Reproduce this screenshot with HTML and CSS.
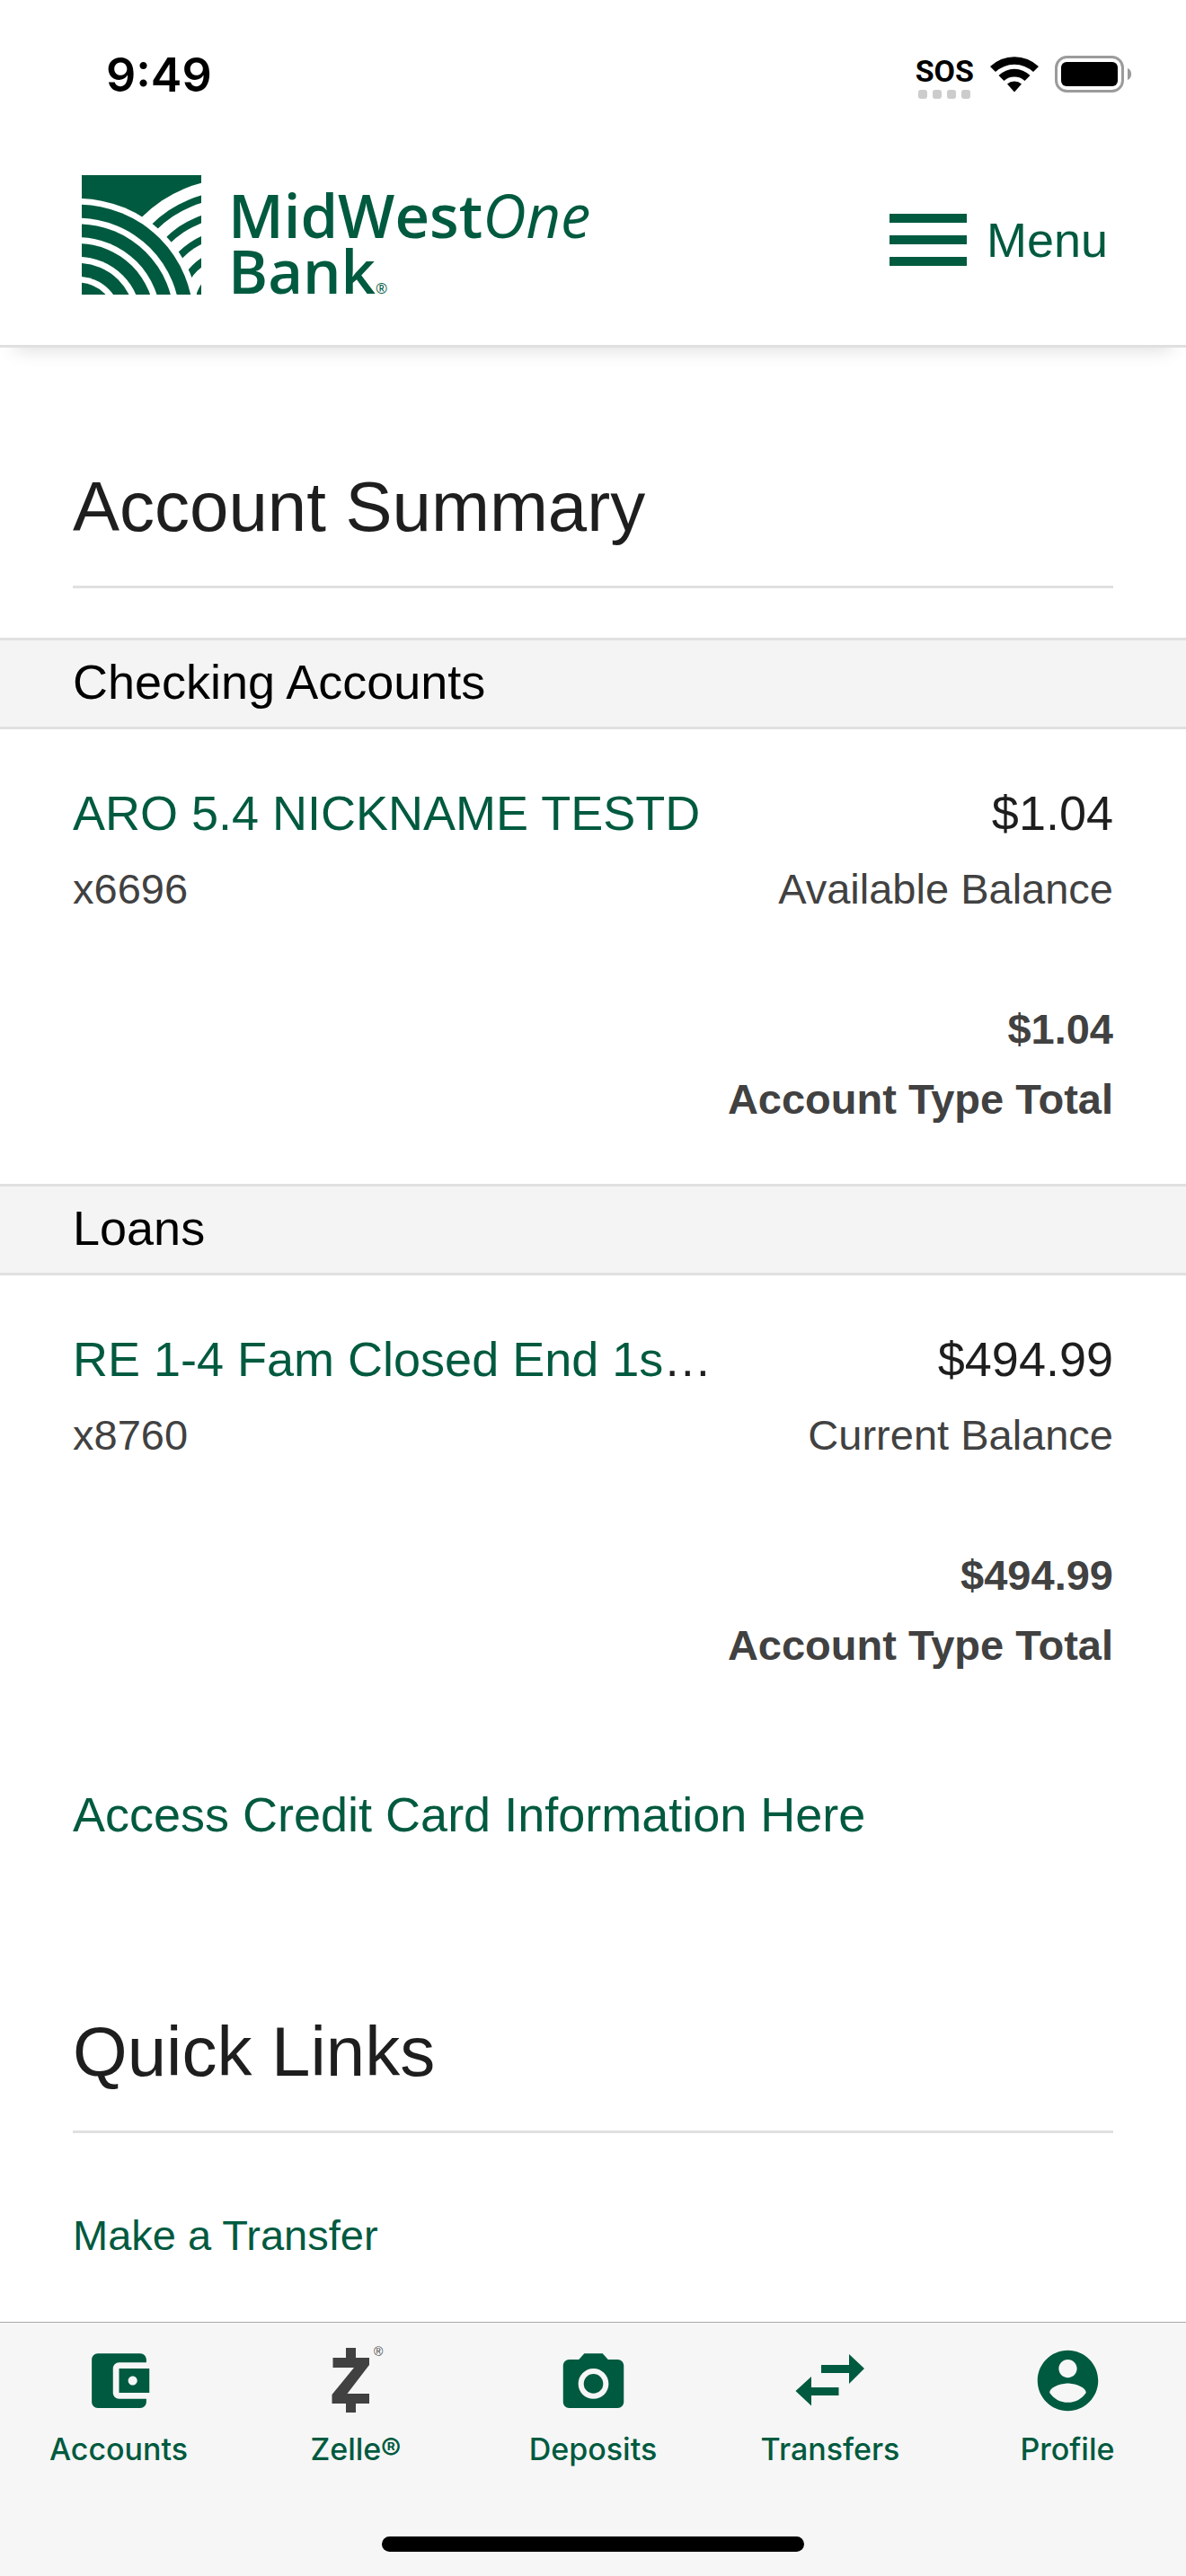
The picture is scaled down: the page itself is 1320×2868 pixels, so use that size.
FILE: index.html
```html
<!DOCTYPE html>
<html lang="en">

<head>
    <meta charset="UTF-8">
    <meta name="viewport" content="width=device-width, initial-scale=1.0">
    <title>Account Summary - MidWestOne Bank</title>
    <link rel="stylesheet" href="styles.css">
</head>

<body>
    <div class="status-bar">
        <span class="time">9:49</span>
        <div class="status-icons">
            <div class="sos">
                <span>SOS</span>
                <div class="dots"><i></i><i></i><i></i><i></i></div>
            </div>
            <svg class="wifi" viewBox="0 0 54 41" width="54" height="41">
                <path d="M0 12A39 39 0 0 1 54 12L48 18A31 31 0 0 0 6 18Z" />
                <path d="M9.500 22A25 25 0 0 1 44.500 22L38.500 28A17 17 0 0 0 15.500 28Z" />
                <path d="M19 31.500A12 12 0 0 1 35 31.500L27 40.500Z" />
            </svg>
            <svg class="battery" viewBox="0 0 86 41" width="86" height="41">
                <rect x="1.500" y="1.500" width="74" height="38" rx="12" fill="#fff" stroke="#9b9b9b" stroke-width="3" />
                <rect x="7" y="7" width="63" height="27" rx="6" />
                <path d="M81 14C86.500 16 86.500 25 81 27Z" fill="#9b9b9b" />
            </svg>
        </div>
    </div>

    <header class="header">
        <a class="logo" href="#">
            <svg viewBox="32 45 398 398" width="133" height="133">
                <rect x="32" y="45" width="398" height="398" fill="#005a3f" />
                <!-- right field -->
                <g fill="#fff">
                    <circle cx="535" cy="482" r="424" />
                    <circle cx="535" cy="482" r="384" fill="#005a3f" />
                    <circle cx="535" cy="482" r="360" />
                    <circle cx="535" cy="482" r="320" fill="#005a3f" />
                    <circle cx="535" cy="482" r="296" />
                    <circle cx="535" cy="482" r="256" fill="#005a3f" />
                    <circle cx="535" cy="482" r="232" />
                    <circle cx="535" cy="482" r="192" fill="#005a3f" />
                    <circle cx="535" cy="482" r="167" />
                    <circle cx="535" cy="482" r="128" fill="#005a3f" />
                </g>
                <!-- left field -->
                <g fill="#fff">
                    <circle cx="20" cy="527" r="404" />
                    <circle cx="20" cy="527" r="384" fill="#005a3f" />
                    <circle cx="20" cy="527" r="339" />
                    <circle cx="20" cy="527" r="319" fill="#005a3f" />
                    <circle cx="20" cy="527" r="275" />
                    <circle cx="20" cy="527" r="254" fill="#005a3f" />
                    <circle cx="20" cy="527" r="210" />
                    <circle cx="20" cy="527" r="189" fill="#005a3f" />
                    <circle cx="20" cy="527" r="144" />
                    <circle cx="20" cy="527" r="124" fill="#005a3f" />
                </g>
            </svg>
            <span class="logo-text">MidWest<em>One</em><br>Bank<small>®</small></span>
        </a>
        <button class="menu-btn" type="button">
            <span class="bars"><i></i><i></i><i></i></span>
            Menu
        </button>
    </header>

    <main>
        <h1 class="title">Account Summary</h1>

        <section class="account-group">
            <h2 class="band">Checking Accounts</h2>
            <div class="account">
                <div class="row">
                    <div class="name"><a href="#">ARO 5.4 NICKNAME TESTD</a></div>
                    <div class="amount">$1.04</div>
                </div>
                <div class="row sub">
                    <span>x6696</span>
                    <span>Available Balance</span>
                </div>
                <div class="total">
                    <div>$1.04</div>
                    <div>Account Type Total</div>
                </div>
            </div>
        </section>

        <section class="account-group">
            <h2 class="band">Loans</h2>
            <div class="account">
                <div class="row">
                    <div class="name"><a href="#">RE 1-4 Fam Closed End 1s</a>…</div>
                    <div class="amount">$494.99</div>
                </div>
                <div class="row sub">
                    <span>x8760</span>
                    <span>Current Balance</span>
                </div>
                <div class="total">
                    <div>$494.99</div>
                    <div>Account Type Total</div>
                </div>
            </div>
        </section>

        <a class="card-link" href="#">Access Credit Card Information Here</a>

        <h2 class="title">Quick Links</h2>
        <a class="quick-link" href="#">Make a Transfer</a>
    </main>

    <footer class="footer">
        <nav class="tabs">
            <a href="#">
                <svg viewBox="0 0 24 24" width="81" height="81">
                    <path d="M21 18v1c0 1.100-.9 2-2 2H5c-1.110 0-2-.9-2-2V5c0-1.100.89-2 2-2h14c1.100 0 2 .9 2 2v1h-9c-1.110 0-2 .9-2 2v8c0 1.100.89 2 2 2h9zm-9-2h10V8H12v8zm4.500-2.500c-.83 0-1.500-.67-1.500-1.500s.67-1.500 1.500-1.500 1.500.67 1.500 1.500-.67 1.500-1.500 1.500z" />
                </svg>
                Accounts
            </a>
            <a href="#">
                <svg class="zelle" viewBox="0 0 81 81" width="81" height="81">
                    <path d="M29 4H40V15H55V23L30.500 55H55V66H40V76H29V66H13.500V56L38 26H14.500V15H29Z" />
                    <text x="60" y="13">®</text>
                </svg>
                Zelle®
            </a>
            <a href="#">
                <svg viewBox="0 -1 24 24" width="81" height="81">
                    <circle cx="12" cy="12" r="3.200" />
                    <path d="M9 2L7.170 4H4c-1.100 0-2 .9-2 2v12c0 1.100.9 2 2 2h16c1.100 0 2-.9 2-2V6c0-1.100-.9-2-2-2h-3.170L15 2H9zm3 15c-2.760 0-5-2.240-5-5s2.240-5 5-5 5 2.240 5 5-2.240 5-5 5z" />
                </svg>
                Deposits
            </a>
            <a href="#">
                <svg viewBox="0 0 81 81" width="81" height="81">
                    <path d="M30 23H61V11L78 27L61 44V32H30ZM49.500 48H19V36L1.500 52L19 68.500V57H49.500Z" />
                </svg>
                Transfers
            </a>
            <a href="#">
                <svg viewBox="0 0 24 24" width="81" height="81">
                    <path d="M12 2C6.480 2 2 6.480 2 12s4.480 10 10 10 10-4.480 10-10S17.520 2 12 2zm0 3c1.660 0 3 1.340 3 3s-1.340 3-3 3-3-1.340-3-3 1.340-3 3-3zm0 14.200c-2.500 0-4.710-1.280-6-3.220.03-1.990 4-3.080 6-3.080 1.990 0 5.970 1.090 6 3.080-1.290 1.940-3.500 3.220-6 3.220z" />
                </svg>
                Profile
            </a>
        </nav>
        <div class="home-indicator"></div>
    </footer>
</body>

</html>
```

FILE: styles.css
```css
* {
    box-sizing: border-box;
}

body {
    display: flex;
    flex-direction: column;
    min-height: 100vh;
    margin: 0;
    background-color: #fff;
    color: #1e1e1e;
    font-family: "Liberation Sans", Arial, sans-serif;
    font-size: 54px;
    line-height: 60px;
}

a {
    color: #005a3f;
    text-decoration: none;
}

/* status bar */
.status-bar {
    display: flex;
    justify-content: space-between;
    padding: 54px 60px 0 118px;
    height: 160px;
    color: #000;
}

.time {
    font-family: Inter, sans-serif;
    font-size: 52px;
    font-weight: 600;
}

.status-icons {
    display: flex;
    align-items: flex-start;
    gap: 18px;
    padding-top: 8px;
}

.sos {
    display: flex;
    flex-direction: column;
    align-items: center;
    gap: 4px;
    font-family: Roboto, sans-serif;
    font-size: 34px;
    font-weight: 700;
    line-height: 34px;
}

.dots {
    display: flex;
    gap: 6px;
}

.dots i {
    width: 10px;
    height: 10px;
    border-radius: 3px;
    background-color: #ccc;
}

/* header */
.header {
    display: flex;
    justify-content: space-between;
    align-items: center;
    padding: 35px 87px 52px 91px;
    border-bottom: 3px solid #e0e0e0;
    box-shadow: 0 18px 20px -16px rgba(0, 0, 0, 0.14);
}

.logo {
    display: flex;
    gap: 30px;
}

.logo-text {
    padding-top: 13px;
    font-family: "Open Sans", sans-serif;
    font-size: 67px;
    font-weight: 600;
    line-height: 62px;
}

.logo-text em {
    font-weight: 400;
}

.logo-text small {
    font-size: 16px;
    font-weight: 400;
    line-height: 16px;
}

.menu-btn {
    display: flex;
    align-items: center;
    gap: 22px;
    padding: 7px 0 0;
    border: none;
    background: none;
    color: #005a3f;
    font: inherit;
    cursor: pointer;
}

.bars {
    display: flex;
    flex-direction: column;
    gap: 14px;
}

.bars i {
    width: 86px;
    height: 10px;
    background-color: #005a3f;
}

/* accounts */
main {
    flex: 1;
}

.title {
    margin: 132px 81px 55px;
    padding-bottom: 43px;
    border-bottom: 3px solid #e0e0e0;
    font-size: 78px;
    font-weight: 400;
    line-height: 90px;
}

.band {
    margin: 0;
    padding: 16px 81px 20px;
    border-top: 3px solid #e0e0e0;
    border-bottom: 3px solid #e0e0e0;
    background-color: #f4f4f4;
    color: #000;
    font-size: 54px;
    font-weight: 400;
}

.account {
    padding: 63px 81px 67px;
}

.row {
    display: flex;
    justify-content: space-between;
}

.sub {
    margin-top: 28px;
    color: #414141;
    font-size: 47px;
    line-height: 54px;
}

.total {
    display: flex;
    flex-direction: column;
    gap: 24px;
    margin-top: 102px;
    color: #414141;
    font-size: 47px;
    font-weight: 700;
    line-height: 54px;
    text-align: right;
}

.card-link {
    display: block;
    margin: 64px 81px 189px;
}

.card-link + .title {
    margin-top: 0;
    margin-bottom: 87px;
}

.quick-link {
    display: block;
    margin: 0 81px;
    font-size: 47px;
    line-height: 54px;
}

/* bottom tabs */
.footer {
    position: sticky;
    bottom: 0;
    padding: 24px 0 27px;
    border-top: 1px solid #a9a9a9;
    background-color: #f6f6f6;
}

.tabs {
    display: grid;
    grid-template-columns: repeat(5, 1fr);
    font-family: Inter, sans-serif;
    font-size: 34px;
    font-weight: 500;
    line-height: 40px;
}

.tabs a {
    display: flex;
    flex-direction: column;
    align-items: center;
    gap: 16px;
    fill: #005a3f;
}

.tabs .zelle {
    fill: #414141;
    font-family: "Liberation Sans", Arial, sans-serif;
    font-size: 14px;
    font-weight: 400;
}

.home-indicator {
    width: 470px;
    height: 17px;
    margin: 77px auto 0;
    border-radius: 9px;
    background-color: #000;
}
```
